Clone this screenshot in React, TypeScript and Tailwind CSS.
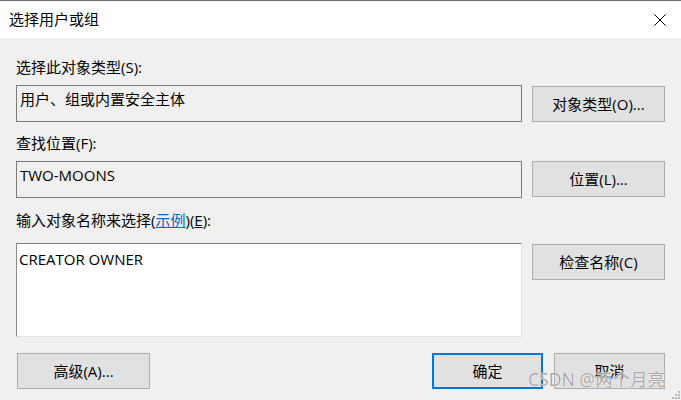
const font = "font-['Open_Sans','Noto_Sans_CJK_SC',sans-serif]";

function Btn({ label, primary = false }: { label: string; primary?: boolean }) {
  return (
    <button
      className={
        "h-[36px] flex items-center justify-center bg-[#e1e1e1] text-[15px] text-black " +
        (primary ? "border-2 border-[#0078d7]" : "border border-[#adadad]")
      }
    >
      {label}
    </button>
  );
}

function ReadBox({ value }: { value: string }) {
  return (
    <div className="h-[37px] border border-[#7a7a7a] bg-[#f0f0f0] pl-[3px] pt-[3px] text-[15px] leading-[20px] text-black">
      {value}
    </div>
  );
}

export default function App() {
  return (
    <div className={`relative w-[681px] h-[400px] overflow-hidden bg-[#f0f0f0] ${font}`}>
      {/* title bar */}
      <div className="h-[38px] bg-white border-t border-[#6e6e6e] flex items-center justify-between pl-[9px] pr-[15px]">
        <span className="text-[15px] text-black">选择用户或组</span>
        <svg width="12" height="12" viewBox="0 0 12 12" aria-hidden="true">
          <path d="M0.5 0.5L11.5 11.5M11.5 0.5L0.5 11.5" stroke="#000" strokeWidth="1" />
        </svg>
      </div>

      <div className="flex flex-col pl-[16px] pr-[16px] pt-[19px] text-[15px] leading-[20px] text-black">
        <div>选择此对象类型(S):</div>
        <div className="mt-[8px] grid grid-cols-[506px_133px] gap-x-[10px] items-start">
          <ReadBox value="用户、组或内置安全主体" />
          <div className="pt-[1px] grid">
            <Btn label="对象类型(O)..." />
          </div>
        </div>

        <div className="mt-[11px]">查找位置(F):</div>
        <div className="mt-[8px] grid grid-cols-[506px_133px] gap-x-[10px] items-start">
          <ReadBox value="TWO-MOONS" />
          <div className="grid">
            <Btn label="位置(L)..." />
          </div>
        </div>

        <div className="mt-[12px]">
          输入对象名称来选择(<span className="text-[#0066cc] underline">示例</span>)(<span className="underline">E</span>):
        </div>
        <div className="mt-[13px] grid grid-cols-[506px_133px] gap-x-[10px] items-start">
          <div className="h-[94px] bg-white border border-t-[#7a7a7a] border-l-[#8a8a8a] border-r-[#e3e3e3] border-b-[#e3e3e3] pl-[2px] pt-[5px]">
            CREATOR OWNER
          </div>
          <div className="pt-[1px] grid">
            <Btn label="检查名称(C)" />
          </div>
        </div>

        <div className="mt-[16px] flex items-start">
          <div className="w-[133px] grid ml-[1px]">
            <Btn label="高级(A)..." />
          </div>
          <div className="ml-auto flex gap-x-[11px]">
            <div className="w-[111px] grid">
              <Btn label="确定" primary />
            </div>
            <div className="w-[111px] grid">
              <Btn label="取消" />
            </div>
          </div>
        </div>
      </div>

      {/* watermark */}
      <div className="absolute left-[528px] top-[367px] font-['Noto_Sans','Noto_Sans_CJK_SC',sans-serif] text-[17.5px] leading-[24px] text-[#a9a9a9] [text-shadow:0_0_1px_#fff,0_0_1px_#fff] whitespace-nowrap">
        CSDN @两个月亮
      </div>

      {/* resize grip */}
      <svg className="absolute right-0 bottom-0" width="10" height="10" viewBox="0 0 10 10" aria-hidden="true">
        <rect x="7" y="1" width="2" height="2" fill="#b8b8b8" />
        <rect x="4" y="4" width="2" height="2" fill="#b8b8b8" />
        <rect x="7" y="4" width="2" height="2" fill="#b8b8b8" />
        <rect x="1" y="7" width="2" height="2" fill="#b8b8b8" />
        <rect x="4" y="7" width="2" height="2" fill="#b8b8b8" />
        <rect x="7" y="7" width="2" height="2" fill="#b8b8b8" />
      </svg>
    </div>
  );
}
